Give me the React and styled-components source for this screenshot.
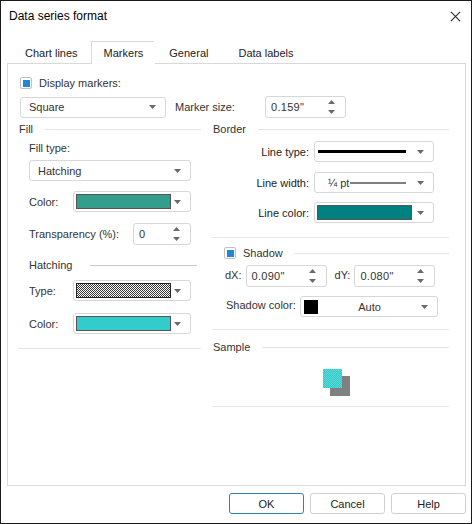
import styled, { createGlobalStyle } from "styled-components";

const Global = createGlobalStyle`
  html, body { margin: 0; padding: 0; background: #fff; }
  body { font-family: "Liberation Sans", Arial, sans-serif; font-size: 11px; color: #333; }
`;

export default function App() {
  return (
    <>
      <Global />
      <Window>
        <TitleBar>
          <span>Data series format</span>
          <Close viewBox="0 0 12 12">
            <path d="M1 1 L11 11 M11 1 L1 11" stroke="#222" strokeWidth="1.1" />
          </Close>
        </TitleBar>

        <Tabs>
          <Tab>Chart lines</Tab>
          <Tab active>Markers</Tab>
          <Tab>General</Tab>
          <Tab>Data labels</Tab>
        </Tabs>

        <Panel>
          <TopArea>
            <CheckRow>
              <Check checked />
              <span>Display markers:</span>
            </CheckRow>
            <MarkerRow>
              <Select w={146}><SelText>Square</SelText><Arrow /></Select>
              <Label style={{ width: 81 }}>Marker size:</Label>
              <Spin w={81}><SpinText>0.159"</SpinText><Spinner /></Spin>
            </MarkerRow>
          </TopArea>

          <Columns>
            <Column w={183}>
              <GroupHead><span>Fill</span><Rule /></GroupHead>
              <Indent>
                <Label>Fill type:</Label>
                <Select w={162} mt={4}><SelText>Hatching</SelText><Arrow /></Select>
                <FieldRow mt={10}>
                  <LeftLabel w={44}>Color:</LeftLabel>
                  <Select w={118}><Swatch c="#339e8c" /><Arrow /></Select>
                </FieldRow>
                <FieldRow mt={11}>
                  <LeftLabel w={104}>Transparency (%):</LeftLabel>
                  <Spin w={58}><SpinText>0</SpinText><Spinner /></Spin>
                </FieldRow>
                <SubHead><span>Hatching</span><Rule /></SubHead>
                <FieldRow mt={7}>
                  <LeftLabel w={44}>Type:</LeftLabel>
                  <Select w={118}><Swatch dotted /><Arrow /></Select>
                </FieldRow>
                <FieldRow mt={12}>
                  <LeftLabel w={44}>Color:</LeftLabel>
                  <Select w={118}><Swatch c="#33cccc" /><Arrow /></Select>
                </FieldRow>
              </Indent>
              <Divider mt={14} />
            </Column>

            <Column w={237}>
              <GroupHead><span>Border</span><Rule /></GroupHead>
              <FieldRow mt={4}>
                <RightLabel>Line type:</RightLabel>
                <Select w={120}><LineSample h={3} c="#000" /><Arrow /></Select>
              </FieldRow>
              <FieldRow mt={10}>
                <RightLabel>Line width:</RightLabel>
                <Select w={120}>
                  <WidthText>¼ pt</WidthText>
                  <LineSample h={2} c="#808080" />
                  <Arrow />
                </Select>
              </FieldRow>
              <FieldRow mt={9}>
                <RightLabel>Line color:</RightLabel>
                <Select w={120}><Swatch c="#008080" /><Arrow /></Select>
              </FieldRow>
              <Divider mt={14} />

              <ShadowHead>
                <Check checked />
                <span>Shadow</span>
                <Rule />
              </ShadowHead>
              <ShadowRow>
                <SmallLabel>dX:</SmallLabel>
                <Spin w={81}><SpinText>0.090"</SpinText><Spinner /></Spin>
                <SmallLabel style={{ marginLeft: 4 }}>dY:</SmallLabel>
                <Spin w={81}><SpinText>0.080"</SpinText><Spinner /></Spin>
              </ShadowRow>
              <ShadowRow mt={9}>
                <SmallLabel style={{ width: 70, paddingLeft: 1 }}>Shadow color:</SmallLabel>
                <Select w={138}>
                  <BlackBox />
                  <AutoText>Auto</AutoText>
                  <Arrow />
                </Select>
              </ShadowRow>
              <Divider mt={12} />

              <GroupHead mt={9}><span>Sample</span><Rule /></GroupHead>
              <SampleArea>
                <SampleBox>
                  <ShadowSquare />
                  <FillSquare />
                </SampleBox>
              </SampleArea>
              <Divider />
            </Column>
          </Columns>
        </Panel>

        <Footer>
          <Button primary>OK</Button>
          <Button>Cancel</Button>
          <Button>Help</Button>
        </Footer>
      </Window>
    </>
  );
}

function Arrow() {
  return (
    <ArrowSvg viewBox="0 0 7 4">
      <path d="M0 0 L7 0 L3.5 4 Z" fill="#6a6a6a" />
    </ArrowSvg>
  );
}

function Spinner() {
  return (
    <SpinSvg viewBox="0 0 7 14">
      <path d="M0 4 L7 4 L3.5 0 Z" fill="#6a6a6a" />
      <path d="M0 10 L7 10 L3.5 14 Z" fill="#6a6a6a" />
    </SpinSvg>
  );
}

const Window = styled.div`
  width: 472px;
  height: 524px;
  box-sizing: border-box;
  border: 1px solid #1a1a1a;
  background: #fff;
  display: flex;
  flex-direction: column;
`;

const TitleBar = styled.div`
  height: 30px;
  display: flex;
  align-items: center;
  justify-content: space-between;
  padding: 0 10px 0 8px;
  font-size: 12px;
  color: #000;
`;

const Close = styled.svg`
  width: 11px;
  height: 11px;
`;

const Tabs = styled.div`
  display: flex;
  margin-top: 10px;
  padding-left: 9px;
  height: 23px;
`;

const Tab = styled.div`
  display: flex;
  align-items: center;
  font-size: 11px;
  color: #222;
  box-sizing: border-box;
  border: 1px solid ${(p) => (p.active ? "#d9d9d9" : "transparent")};
  border-bottom: none;
  margin: 0 ${(p) => (p.active ? "-2px" : "0")};
  padding: 0 ${(p) => (p.active ? "12px" : "14px")};
  background: #fff;
  position: relative;
  z-index: 1;
  height: ${(p) => (p.active ? "23px" : "22px")};
`;

const Panel = styled.div`
  margin: 0 5px 0 6px;
  height: 423px;
  box-sizing: border-box;
  border: 1px solid #d9d9d9;
  margin-top: -1px;
`;

const TopArea = styled.div`
  padding: 11px 0 0 12px;
`;

const CheckRow = styled.div`
  display: flex;
  align-items: center;
  gap: 7px;
  height: 16px;
  font-size: 11px;
`;

const Check = styled.div`
  width: 12px;
  height: 12px;
  box-sizing: border-box;
  border: 1px solid #c2c2c2;
  border-radius: 2px;
  background: #fff;
  display: flex;
  align-items: center;
  justify-content: center;
  &::after {
    content: "";
    width: 7px;
    height: 7px;
    background: ${(p) => (p.checked ? "#1e88d2" : "transparent")};
  }
`;

const MarkerRow = styled.div`
  display: flex;
  align-items: center;
  margin-top: 5px;
  gap: 9px;
`;

const Label = styled.div`
  height: 16px;
  line-height: 16px;
  font-size: 11px;
  white-space: nowrap;
`;

const Select = styled.div`
  width: ${(p) => p.w}px;
  height: 21px;
  margin-top: ${(p) => p.mt || 0}px;
  box-sizing: border-box;
  border: 1px solid #d7d7d7;
  border-radius: 3px;
  background: #fff;
  display: flex;
  align-items: center;
  padding: 0 9px 0 2px;
  flex-shrink: 0;
`;

const SelText = styled.span`
  flex: 1;
  padding-left: 6px;
  font-size: 11px;
`;

const ArrowSvg = styled.svg`
  width: 7px;
  height: 4px;
  margin-left: auto;
  flex-shrink: 0;
`;

const Spin = styled.div`
  width: ${(p) => p.w}px;
  height: 22px;
  box-sizing: border-box;
  border: 1px solid #d7d7d7;
  border-radius: 3px;
  display: flex;
  align-items: center;
  padding: 0 10px 0 5px;
  flex-shrink: 0;
`;

const SpinText = styled.span`
  flex: 1;
  font-size: 11px;
  letter-spacing: 0.3px;
`;

const SpinSvg = styled.svg`
  width: 7px;
  height: 14px;
`;

const Columns = styled.div`
  display: flex;
  gap: 11px;
  padding-left: 10px;
  margin-top: 3px;
`;

const Column = styled.div`
  width: ${(p) => p.w}px;
  display: flex;
  flex-direction: column;
`;

const GroupHead = styled.div`
  display: flex;
  align-items: center;
  gap: 12px;
  height: 16px;
  font-size: 11px;
  margin-top: ${(p) => p.mt || 0}px;
  span { padding-left: 1px; }
`;

const Rule = styled.div`
  flex: 1;
  height: 1px;
  background: #e3e3e3;
`;

const Indent = styled.div`
  padding-left: 11px;
  display: flex;
  flex-direction: column;
  margin-top: 3px;
`;

const FieldRow = styled.div`
  display: flex;
  align-items: center;
  margin-top: ${(p) => p.mt || 0}px;
`;

const LeftLabel = styled.div`
  width: ${(p) => p.w}px;
  font-size: 11px;
  white-space: nowrap;
`;

const RightLabel = styled.div`
  width: 97px;
  padding-right: 5px;
  text-align: right;
  font-size: 11px;
  color: #222;
  white-space: nowrap;
`;

const SubHead = styled.div`
  display: flex;
  align-items: center;
  gap: 18px;
  height: 16px;
  margin-top: 12px;
  padding-right: 4px;
  font-size: 11px;
  div { background: #c8c8c8; }
`;

const Swatch = styled.div`
  width: 95px;
  height: 15px;
  box-sizing: border-box;
  border: 1px solid ${(p) => (p.dotted ? "#000" : "#555")};
  background: ${(p) =>
    p.dotted
      ? "repeating-conic-gradient(#111 0 25%, #fff 0 50%) 0 0 / 2px 2px"
      : p.c};
  opacity: ${(p) => (p.dotted ? 0.85 : 1)};
`;

const LineSample = styled.div`
  flex: 1;
  height: ${(p) => p.h}px;
  background: ${(p) => p.c};
  margin: 0 11px 0 1px;
`;

const WidthText = styled.span`
  padding-left: 11px;
  font-size: 11px;
`;

const Divider = styled.div`
  height: 1px;
  background: #e6e6e6;
  margin-top: ${(p) => p.mt || 0}px;
`;

const ShadowHead = styled.div`
  display: flex;
  align-items: center;
  gap: 7px;
  height: 16px;
  margin-top: 7px;
  padding-left: 12px;
  font-size: 11px;
  div:last-child { margin-left: 4px; }
`;

const ShadowRow = styled.div`
  display: flex;
  align-items: center;
  margin-top: ${(p) => p.mt ?? 4}px;
  padding-left: 13px;
  gap: 4px;
`;

const SmallLabel = styled.div`
  font-size: 11px;
  white-space: nowrap;
  margin-top: -3px;
`;

const BlackBox = styled.div`
  width: 14px;
  height: 14px;
  background: #000;
  margin-left: 1px;
`;

const AutoText = styled.span`
  flex: 1;
  text-align: center;
  font-size: 11px;
`;

const SampleArea = styled.div`
  height: 51px;
  display: flex;
  align-items: center;
  padding: 3px 0 0 111px;
  box-sizing: border-box;
`;

const SampleBox = styled.div`
  width: 27px;
  height: 27px;
  position: relative;
`;

const ShadowSquare = styled.div`
  position: absolute;
  left: 7px;
  top: 7px;
  width: 20px;
  height: 20px;
  background: #808080;
`;

const FillSquare = styled.div`
  position: absolute;
  left: 0;
  top: 0;
  width: 19px;
  height: 19px;
  background: repeating-conic-gradient(#33cccc 0 25%, #5ed6d6 0 50%) 0 0 / 2px 2px;
`;

const Footer = styled.div`
  display: flex;
  justify-content: flex-end;
  gap: 6px;
  padding: 7px 5px 0 0;
`;

const Button = styled.div`
  width: 75px;
  height: 21px;
  box-sizing: border-box;
  border: 1px solid ${(p) => (p.primary ? "#2f7fbf" : "#d0d0d0")};
  border-radius: 3px;
  display: flex;
  align-items: center;
  justify-content: center;
  font-size: 11px;
  color: #222;
`;
